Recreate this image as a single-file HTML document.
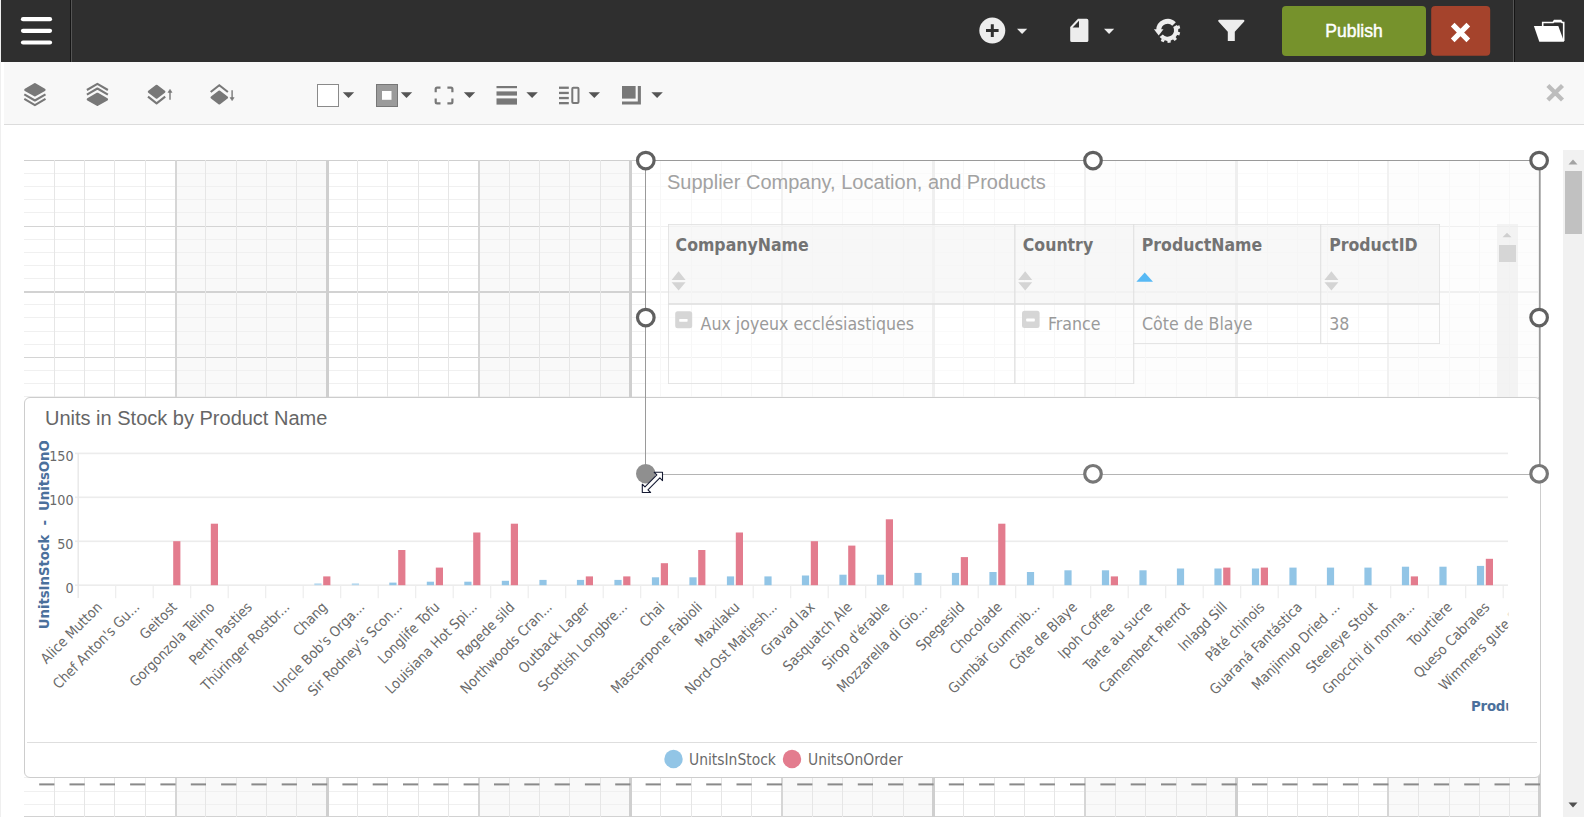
<!DOCTYPE html><html><head><meta charset="utf-8"><title>Dashboard Designer</title><style>
*{box-sizing:border-box}
html,body{margin:0;padding:0}
body{width:1584px;height:817px;overflow:hidden;background:#fff;position:relative;font-family:"Liberation Sans",sans-serif;}
.abs{position:absolute}
#topbar{position:absolute;left:1px;top:0;width:1583px;height:62px;background:#2f2f2f}
#toolbar{position:absolute;left:4px;top:62px;width:1580px;height:63px;background:#f8f8f8;border-bottom:1px solid #dcdcdc}
#leftstrip{position:absolute;left:0;top:0;width:1px;height:817px;background:#efefef}
.os{font-family:"DejaVu Sans Condensed","DejaVu Sans","Liberation Sans",sans-serif;font-stretch:condensed}
svg{position:absolute;left:0;top:0;overflow:visible}
</style></head><body>
<div id="leftstrip"></div>
<div id="canvas" class="abs" style="left:0;top:0;width:1584px;height:817px"><svg width="1584" height="817" viewBox="0 0 1584 817" shape-rendering="crispEdges"><rect x="175.60" y="160.00" width="151.60" height="657.00" fill="#f9f9f9"/><rect x="478.80" y="160.00" width="151.60" height="657.00" fill="#f9f9f9"/><rect x="782.00" y="160.00" width="151.60" height="657.00" fill="#f9f9f9"/><rect x="1085.20" y="160.00" width="151.60" height="657.00" fill="#f9f9f9"/><rect x="1388.40" y="160.00" width="151.60" height="657.00" fill="#f9f9f9"/><rect x="24.00" y="160.00" width="1516.00" height="1" fill="#cfcfcf"/><rect x="24.00" y="173.00" width="1516.00" height="1" fill="#f0f0f0"/><rect x="24.00" y="186.00" width="1516.00" height="1" fill="#f0f0f0"/><rect x="24.00" y="199.00" width="1516.00" height="1" fill="#f0f0f0"/><rect x="24.00" y="212.00" width="1516.00" height="1" fill="#f0f0f0"/><rect x="24.00" y="226.00" width="1516.00" height="1" fill="#d4d4d4"/><rect x="24.00" y="239.00" width="1516.00" height="1" fill="#f0f0f0"/><rect x="24.00" y="252.00" width="1516.00" height="1" fill="#f0f0f0"/><rect x="24.00" y="265.00" width="1516.00" height="1" fill="#f0f0f0"/><rect x="24.00" y="278.00" width="1516.00" height="1" fill="#f0f0f0"/><rect x="24.00" y="291.00" width="1516.00" height="2" fill="#d2d2d2"/><rect x="24.00" y="304.00" width="1516.00" height="1" fill="#f0f0f0"/><rect x="24.00" y="317.00" width="1516.00" height="1" fill="#f0f0f0"/><rect x="24.00" y="331.00" width="1516.00" height="1" fill="#f0f0f0"/><rect x="24.00" y="344.00" width="1516.00" height="1" fill="#f0f0f0"/><rect x="24.00" y="357.00" width="1516.00" height="1" fill="#d4d4d4"/><rect x="24.00" y="370.00" width="1516.00" height="1" fill="#f0f0f0"/><rect x="24.00" y="383.00" width="1516.00" height="1" fill="#f0f0f0"/><rect x="24.00" y="396.00" width="1516.00" height="1" fill="#f0f0f0"/><rect x="24.00" y="409.00" width="1516.00" height="1" fill="#f0f0f0"/><rect x="24.00" y="422.00" width="1516.00" height="2" fill="#d2d2d2"/><rect x="24.00" y="436.00" width="1516.00" height="1" fill="#f0f0f0"/><rect x="24.00" y="449.00" width="1516.00" height="1" fill="#f0f0f0"/><rect x="24.00" y="462.00" width="1516.00" height="1" fill="#f0f0f0"/><rect x="24.00" y="475.00" width="1516.00" height="1" fill="#f0f0f0"/><rect x="24.00" y="488.00" width="1516.00" height="1" fill="#d4d4d4"/><rect x="24.00" y="501.00" width="1516.00" height="1" fill="#f0f0f0"/><rect x="24.00" y="514.00" width="1516.00" height="1" fill="#f0f0f0"/><rect x="24.00" y="527.00" width="1516.00" height="1" fill="#f0f0f0"/><rect x="24.00" y="540.00" width="1516.00" height="1" fill="#f0f0f0"/><rect x="24.00" y="554.00" width="1516.00" height="2" fill="#d2d2d2"/><rect x="24.00" y="567.00" width="1516.00" height="1" fill="#f0f0f0"/><rect x="24.00" y="580.00" width="1516.00" height="1" fill="#f0f0f0"/><rect x="24.00" y="593.00" width="1516.00" height="1" fill="#f0f0f0"/><rect x="24.00" y="606.00" width="1516.00" height="1" fill="#f0f0f0"/><rect x="24.00" y="619.00" width="1516.00" height="1" fill="#d4d4d4"/><rect x="24.00" y="632.00" width="1516.00" height="1" fill="#f0f0f0"/><rect x="24.00" y="645.00" width="1516.00" height="1" fill="#f0f0f0"/><rect x="24.00" y="659.00" width="1516.00" height="1" fill="#f0f0f0"/><rect x="24.00" y="672.00" width="1516.00" height="1" fill="#f0f0f0"/><rect x="24.00" y="685.00" width="1516.00" height="2" fill="#d2d2d2"/><rect x="24.00" y="698.00" width="1516.00" height="1" fill="#f0f0f0"/><rect x="24.00" y="711.00" width="1516.00" height="1" fill="#f0f0f0"/><rect x="24.00" y="724.00" width="1516.00" height="1" fill="#f0f0f0"/><rect x="24.00" y="737.00" width="1516.00" height="1" fill="#f0f0f0"/><rect x="24.00" y="750.00" width="1516.00" height="1" fill="#d4d4d4"/><rect x="24.00" y="764.00" width="1516.00" height="1" fill="#f0f0f0"/><rect x="24.00" y="777.00" width="1516.00" height="1" fill="#f0f0f0"/><rect x="24.00" y="791.00" width="1516.00" height="1" fill="#f0f0f0"/><rect x="24.00" y="804.00" width="1516.00" height="1" fill="#f0f0f0"/><rect x="24.00" y="816.00" width="1516.00" height="2" fill="#d2d2d2"/><rect x="54" y="160.00" width="1" height="657.00" fill="#e6e6e6"/><rect x="84" y="160.00" width="1" height="657.00" fill="#e6e6e6"/><rect x="114" y="160.00" width="1" height="657.00" fill="#e6e6e6"/><rect x="145" y="160.00" width="1" height="657.00" fill="#e6e6e6"/><rect x="175" y="160.00" width="2" height="657.00" fill="#d6d6d6"/><rect x="205" y="160.00" width="1" height="657.00" fill="#e6e6e6"/><rect x="236" y="160.00" width="1" height="657.00" fill="#e6e6e6"/><rect x="266" y="160.00" width="1" height="657.00" fill="#e6e6e6"/><rect x="296" y="160.00" width="1" height="657.00" fill="#e6e6e6"/><rect x="326" y="160.00" width="3" height="657.00" fill="#cfcfcf"/><rect x="357" y="160.00" width="1" height="657.00" fill="#e6e6e6"/><rect x="387" y="160.00" width="1" height="657.00" fill="#e6e6e6"/><rect x="418" y="160.00" width="1" height="657.00" fill="#e6e6e6"/><rect x="448" y="160.00" width="1" height="657.00" fill="#e6e6e6"/><rect x="478" y="160.00" width="2" height="657.00" fill="#d6d6d6"/><rect x="509" y="160.00" width="1" height="657.00" fill="#e6e6e6"/><rect x="539" y="160.00" width="1" height="657.00" fill="#e6e6e6"/><rect x="569" y="160.00" width="1" height="657.00" fill="#e6e6e6"/><rect x="600" y="160.00" width="1" height="657.00" fill="#e6e6e6"/><rect x="629" y="160.00" width="3" height="657.00" fill="#cfcfcf"/><rect x="660" y="160.00" width="1" height="657.00" fill="#e6e6e6"/><rect x="691" y="160.00" width="1" height="657.00" fill="#e6e6e6"/><rect x="721" y="160.00" width="1" height="657.00" fill="#e6e6e6"/><rect x="751" y="160.00" width="1" height="657.00" fill="#e6e6e6"/><rect x="781" y="160.00" width="2" height="657.00" fill="#d6d6d6"/><rect x="812" y="160.00" width="1" height="657.00" fill="#e6e6e6"/><rect x="842" y="160.00" width="1" height="657.00" fill="#e6e6e6"/><rect x="872" y="160.00" width="1" height="657.00" fill="#e6e6e6"/><rect x="903" y="160.00" width="1" height="657.00" fill="#e6e6e6"/><rect x="932" y="160.00" width="3" height="657.00" fill="#cfcfcf"/><rect x="963" y="160.00" width="1" height="657.00" fill="#e6e6e6"/><rect x="994" y="160.00" width="1" height="657.00" fill="#e6e6e6"/><rect x="1024" y="160.00" width="1" height="657.00" fill="#e6e6e6"/><rect x="1054" y="160.00" width="1" height="657.00" fill="#e6e6e6"/><rect x="1084" y="160.00" width="2" height="657.00" fill="#d6d6d6"/><rect x="1115" y="160.00" width="1" height="657.00" fill="#e6e6e6"/><rect x="1145" y="160.00" width="1" height="657.00" fill="#e6e6e6"/><rect x="1176" y="160.00" width="1" height="657.00" fill="#e6e6e6"/><rect x="1206" y="160.00" width="1" height="657.00" fill="#e6e6e6"/><rect x="1235" y="160.00" width="3" height="657.00" fill="#cfcfcf"/><rect x="1267" y="160.00" width="1" height="657.00" fill="#e6e6e6"/><rect x="1297" y="160.00" width="1" height="657.00" fill="#e6e6e6"/><rect x="1327" y="160.00" width="1" height="657.00" fill="#e6e6e6"/><rect x="1358" y="160.00" width="1" height="657.00" fill="#e6e6e6"/><rect x="1387" y="160.00" width="2" height="657.00" fill="#d6d6d6"/><rect x="1418" y="160.00" width="1" height="657.00" fill="#e6e6e6"/><rect x="1449" y="160.00" width="1" height="657.00" fill="#e6e6e6"/><rect x="1479" y="160.00" width="1" height="657.00" fill="#e6e6e6"/><rect x="1509" y="160.00" width="1" height="657.00" fill="#e6e6e6"/><rect x="1538" y="160.00" width="3" height="657.00" fill="#cfcfcf"/><g shape-rendering="auto"><rect x="39.2" y="783.4" width="15.2" height="2" fill="#8a8a8a"/><rect x="69.5" y="783.4" width="15.2" height="2" fill="#8a8a8a"/><rect x="99.8" y="783.4" width="15.2" height="2" fill="#8a8a8a"/><rect x="130.1" y="783.4" width="15.2" height="2" fill="#8a8a8a"/><rect x="160.4" y="783.4" width="15.2" height="2" fill="#8a8a8a"/><rect x="190.8" y="783.4" width="15.2" height="2" fill="#8a8a8a"/><rect x="221.1" y="783.4" width="15.2" height="2" fill="#8a8a8a"/><rect x="251.4" y="783.4" width="15.2" height="2" fill="#8a8a8a"/><rect x="281.7" y="783.4" width="15.2" height="2" fill="#8a8a8a"/><rect x="312.0" y="783.4" width="15.2" height="2" fill="#8a8a8a"/><rect x="342.4" y="783.4" width="15.2" height="2" fill="#8a8a8a"/><rect x="372.7" y="783.4" width="15.2" height="2" fill="#8a8a8a"/><rect x="403.0" y="783.4" width="15.2" height="2" fill="#8a8a8a"/><rect x="433.3" y="783.4" width="15.2" height="2" fill="#8a8a8a"/><rect x="463.6" y="783.4" width="15.2" height="2" fill="#8a8a8a"/><rect x="494.0" y="783.4" width="15.2" height="2" fill="#8a8a8a"/><rect x="524.3" y="783.4" width="15.2" height="2" fill="#8a8a8a"/><rect x="554.6" y="783.4" width="15.2" height="2" fill="#8a8a8a"/><rect x="584.9" y="783.4" width="15.2" height="2" fill="#8a8a8a"/><rect x="615.2" y="783.4" width="15.2" height="2" fill="#8a8a8a"/><rect x="645.6" y="783.4" width="15.2" height="2" fill="#8a8a8a"/><rect x="675.9" y="783.4" width="15.2" height="2" fill="#8a8a8a"/><rect x="706.2" y="783.4" width="15.2" height="2" fill="#8a8a8a"/><rect x="736.5" y="783.4" width="15.2" height="2" fill="#8a8a8a"/><rect x="766.8" y="783.4" width="15.2" height="2" fill="#8a8a8a"/><rect x="797.2" y="783.4" width="15.2" height="2" fill="#8a8a8a"/><rect x="827.5" y="783.4" width="15.2" height="2" fill="#8a8a8a"/><rect x="857.8" y="783.4" width="15.2" height="2" fill="#8a8a8a"/><rect x="888.1" y="783.4" width="15.2" height="2" fill="#8a8a8a"/><rect x="918.4" y="783.4" width="15.2" height="2" fill="#8a8a8a"/><rect x="948.8" y="783.4" width="15.2" height="2" fill="#8a8a8a"/><rect x="979.1" y="783.4" width="15.2" height="2" fill="#8a8a8a"/><rect x="1009.4" y="783.4" width="15.2" height="2" fill="#8a8a8a"/><rect x="1039.7" y="783.4" width="15.2" height="2" fill="#8a8a8a"/><rect x="1070.0" y="783.4" width="15.2" height="2" fill="#8a8a8a"/><rect x="1100.4" y="783.4" width="15.2" height="2" fill="#8a8a8a"/><rect x="1130.7" y="783.4" width="15.2" height="2" fill="#8a8a8a"/><rect x="1161.0" y="783.4" width="15.2" height="2" fill="#8a8a8a"/><rect x="1191.3" y="783.4" width="15.2" height="2" fill="#8a8a8a"/><rect x="1221.6" y="783.4" width="15.2" height="2" fill="#8a8a8a"/><rect x="1252.0" y="783.4" width="15.2" height="2" fill="#8a8a8a"/><rect x="1282.3" y="783.4" width="15.2" height="2" fill="#8a8a8a"/><rect x="1312.6" y="783.4" width="15.2" height="2" fill="#8a8a8a"/><rect x="1342.9" y="783.4" width="15.2" height="2" fill="#8a8a8a"/><rect x="1373.2" y="783.4" width="15.2" height="2" fill="#8a8a8a"/><rect x="1403.6" y="783.4" width="15.2" height="2" fill="#8a8a8a"/><rect x="1433.9" y="783.4" width="15.2" height="2" fill="#8a8a8a"/><rect x="1464.2" y="783.4" width="15.2" height="2" fill="#8a8a8a"/><rect x="1494.5" y="783.4" width="15.2" height="2" fill="#8a8a8a"/><rect x="1524.8" y="783.4" width="15.2" height="2" fill="#8a8a8a"/></g></svg></div>
<div id="widget" class="abs os" style="left:646px;top:161px;width:894px;height:236px;background:rgba(255,255,255,0.66);overflow:hidden">
<div class="abs" style="left:21px;top:9px;font-family:'Liberation Sans',sans-serif;font-size:20px;line-height:24px;color:#a2a2a2;white-space:nowrap">Supplier Company, Location, and Products</div>
<!-- inner scrollbar -->
<div class="abs" style="left:851px;top:63px;width:21px;height:180px;background:rgba(238,238,238,0.62)"></div>
<div class="abs" style="left:853px;top:84px;width:17px;height:17px;background:#d6d6d6"></div>
<svg width="894" height="236" viewBox="646 161 894 236">
<path d="M1502.5 237.2h9l-4.5-4.5z" fill="#cfcfcf"/>
<!-- header bg -->
<rect x="669" y="225" width="770" height="79" fill="#f4f4f4" fill-opacity="0.6"/>
<!-- borders -->
<g fill="#e0e0e0" fill-opacity="0.85">
<rect x="668" y="224" width="772" height="1"/>
<rect x="668" y="303" width="772" height="2"/>
<rect x="668" y="224" width="1" height="160"/>
<rect x="1014" y="224" width="1.6" height="160"/>
<rect x="1133" y="224" width="1.3" height="160"/>
<rect x="1320" y="224" width="1.3" height="120"/>
<rect x="1439" y="224" width="1" height="120"/>
<rect x="668" y="383" width="466" height="1"/>
<rect x="1133" y="343" width="307" height="1"/>
</g>
<!-- sort arrows -->
<g fill="#d4d4d4">
<path d="M671.6 280l7-8.8l7 8.8zM671.6 282.2h14l-7 8.2z"/>
<path d="M1018.2 280l7-8.8l7 8.8zM1018.2 282.2h14l-7 8.2z"/>
<path d="M1324.4 280l7-8.8l7 8.8zM1324.4 282.2h14l-7 8.2z"/>
</g>
<path d="M1136.4 281.8l8.3-9.4l8.3 9.4z" fill="#57b9f5"/>
<!-- minus boxes -->
<rect x="675.2" y="311.2" width="17" height="17" rx="2.5" fill="#d6d6d6"/><rect x="679.2" y="318.9" width="8.4" height="2.8" rx="0.6" fill="#fff"/>
<rect x="1022" y="310.8" width="17.6" height="17.2" rx="2.5" fill="#d6d6d6"/><rect x="1026.2" y="318.6" width="8.6" height="2.8" rx="0.6" fill="#fff"/>
<g font-size="17.5" font-weight="bold" fill="#737373">
<text x="675.6" y="250.9">CompanyName</text>
<text x="1022.8" y="250.9">Country</text>
<text x="1141.8" y="250.9">ProductName</text>
<text x="1329.2" y="250.9">ProductID</text>
</g>
<g font-size="17.6" fill="#9a9a9a">
<text x="700.6" y="329.8">Aux joyeux ecclésiastiques</text>
<text x="1048" y="329.8">France</text>
<text x="1142" y="329.8">Côte de Blaye</text>
<text x="1329.2" y="329.8">38</text>
</g>
</svg>
</div>

<div id="chartpanel" class="abs" style="left:24px;top:397px;width:1517px;height:381px;background:#fff;border:1px solid #cdcdcd;border-radius:6px"></div>
<div class="abs" style="left:45px;top:406px;font-size:20px;line-height:24px;color:#666;white-space:nowrap">Units in Stock by Product Name</div>
<div class="abs" style="left:27px;top:742px;width:1510px;height:1px;background:#dedede"></div>
<svg width="1584" height="817" viewBox="0 0 1584 817">
<defs><clipPath id="cp"><rect x="24" y="440" width="1484.2" height="290"/></clipPath><clipPath id="cpy"><rect x="24" y="441" width="60" height="240"/></clipPath></defs>
<g clip-path="url(#cp)">
<rect x="75" y="584.4" width="1433.2" height="1.6" fill="#ececec"/>
<rect x="75" y="540.5" width="1433.2" height="1.6" fill="#ececec"/>
<rect x="75" y="496.5" width="1433.2" height="1.6" fill="#ececec"/>
<rect x="75" y="452.6" width="1433.2" height="1.6" fill="#ececec"/>
<rect x="77.5" y="453" width="1.4" height="145" fill="#e8e8e8"/>
<rect x="115.1" y="585.2" width="1.2" height="13" fill="#ededed"/>
<rect x="152.6" y="585.2" width="1.2" height="13" fill="#ededed"/>
<rect x="190.1" y="585.2" width="1.2" height="13" fill="#ededed"/>
<rect x="227.6" y="585.2" width="1.2" height="13" fill="#ededed"/>
<rect x="265.1" y="585.2" width="1.2" height="13" fill="#ededed"/>
<rect x="302.6" y="585.2" width="1.2" height="13" fill="#ededed"/>
<rect x="340.1" y="585.2" width="1.2" height="13" fill="#ededed"/>
<rect x="377.6" y="585.2" width="1.2" height="13" fill="#ededed"/>
<rect x="415.1" y="585.2" width="1.2" height="13" fill="#ededed"/>
<rect x="452.6" y="585.2" width="1.2" height="13" fill="#ededed"/>
<rect x="490.1" y="585.2" width="1.2" height="13" fill="#ededed"/>
<rect x="527.6" y="585.2" width="1.2" height="13" fill="#ededed"/>
<rect x="565.1" y="585.2" width="1.2" height="13" fill="#ededed"/>
<rect x="602.6" y="585.2" width="1.2" height="13" fill="#ededed"/>
<rect x="640.1" y="585.2" width="1.2" height="13" fill="#ededed"/>
<rect x="677.6" y="585.2" width="1.2" height="13" fill="#ededed"/>
<rect x="715.1" y="585.2" width="1.2" height="13" fill="#ededed"/>
<rect x="752.6" y="585.2" width="1.2" height="13" fill="#ededed"/>
<rect x="790.1" y="585.2" width="1.2" height="13" fill="#ededed"/>
<rect x="827.6" y="585.2" width="1.2" height="13" fill="#ededed"/>
<rect x="865.1" y="585.2" width="1.2" height="13" fill="#ededed"/>
<rect x="902.6" y="585.2" width="1.2" height="13" fill="#ededed"/>
<rect x="940.1" y="585.2" width="1.2" height="13" fill="#ededed"/>
<rect x="977.6" y="585.2" width="1.2" height="13" fill="#ededed"/>
<rect x="1015.1" y="585.2" width="1.2" height="13" fill="#ededed"/>
<rect x="1052.6" y="585.2" width="1.2" height="13" fill="#ededed"/>
<rect x="1090.1" y="585.2" width="1.2" height="13" fill="#ededed"/>
<rect x="1127.6" y="585.2" width="1.2" height="13" fill="#ededed"/>
<rect x="1165.1" y="585.2" width="1.2" height="13" fill="#ededed"/>
<rect x="1202.6" y="585.2" width="1.2" height="13" fill="#ededed"/>
<rect x="1240.1" y="585.2" width="1.2" height="13" fill="#ededed"/>
<rect x="1277.6" y="585.2" width="1.2" height="13" fill="#ededed"/>
<rect x="1315.1" y="585.2" width="1.2" height="13" fill="#ededed"/>
<rect x="1352.6" y="585.2" width="1.2" height="13" fill="#ededed"/>
<rect x="1390.1" y="585.2" width="1.2" height="13" fill="#ededed"/>
<rect x="1427.6" y="585.2" width="1.2" height="13" fill="#ededed"/>
<rect x="1465.1" y="585.2" width="1.2" height="13" fill="#ededed"/>
<rect x="1502.6" y="585.2" width="1.2" height="13" fill="#ededed"/>
<rect x="173.2" y="541.2" width="7.2" height="44.0" fill="#e37c8e"/>
<rect x="210.8" y="523.7" width="7.2" height="61.5" fill="#e37c8e"/>
<rect x="314.3" y="583.4" width="7.2" height="1.8" fill="#b5d8ee"/>
<rect x="323.2" y="576.4" width="7.2" height="8.8" fill="#e37c8e"/>
<rect x="351.8" y="583.4" width="7.2" height="1.8" fill="#b5d8ee"/>
<rect x="389.3" y="582.6" width="7.2" height="2.6" fill="#92c5e6"/>
<rect x="398.2" y="550.0" width="7.2" height="35.2" fill="#e37c8e"/>
<rect x="426.8" y="581.7" width="7.2" height="3.5" fill="#92c5e6"/>
<rect x="435.8" y="567.6" width="7.2" height="17.6" fill="#e37c8e"/>
<rect x="464.3" y="581.7" width="7.2" height="3.5" fill="#92c5e6"/>
<rect x="473.2" y="532.5" width="7.2" height="52.7" fill="#e37c8e"/>
<rect x="501.8" y="580.8" width="7.2" height="4.4" fill="#92c5e6"/>
<rect x="510.8" y="523.7" width="7.2" height="61.5" fill="#e37c8e"/>
<rect x="539.4" y="579.9" width="7.2" height="5.3" fill="#92c5e6"/>
<rect x="576.9" y="579.9" width="7.2" height="5.3" fill="#92c5e6"/>
<rect x="585.8" y="576.4" width="7.2" height="8.8" fill="#e37c8e"/>
<rect x="614.4" y="579.9" width="7.2" height="5.3" fill="#92c5e6"/>
<rect x="623.2" y="576.4" width="7.2" height="8.8" fill="#e37c8e"/>
<rect x="651.9" y="577.3" width="7.2" height="7.9" fill="#92c5e6"/>
<rect x="660.8" y="563.2" width="7.2" height="22.0" fill="#e37c8e"/>
<rect x="689.4" y="577.3" width="7.2" height="7.9" fill="#92c5e6"/>
<rect x="698.2" y="550.0" width="7.2" height="35.2" fill="#e37c8e"/>
<rect x="726.9" y="576.4" width="7.2" height="8.8" fill="#92c5e6"/>
<rect x="735.8" y="532.5" width="7.2" height="52.7" fill="#e37c8e"/>
<rect x="764.4" y="576.4" width="7.2" height="8.8" fill="#92c5e6"/>
<rect x="801.9" y="575.5" width="7.2" height="9.7" fill="#92c5e6"/>
<rect x="810.8" y="541.2" width="7.2" height="44.0" fill="#e37c8e"/>
<rect x="839.4" y="574.7" width="7.2" height="10.5" fill="#92c5e6"/>
<rect x="848.2" y="545.6" width="7.2" height="39.6" fill="#e37c8e"/>
<rect x="876.9" y="574.7" width="7.2" height="10.5" fill="#92c5e6"/>
<rect x="885.8" y="519.3" width="7.2" height="65.9" fill="#e37c8e"/>
<rect x="914.4" y="572.9" width="7.2" height="12.3" fill="#92c5e6"/>
<rect x="951.9" y="572.9" width="7.2" height="12.3" fill="#92c5e6"/>
<rect x="960.8" y="557.1" width="7.2" height="28.1" fill="#e37c8e"/>
<rect x="989.4" y="572.0" width="7.2" height="13.2" fill="#92c5e6"/>
<rect x="998.2" y="523.7" width="7.2" height="61.5" fill="#e37c8e"/>
<rect x="1026.9" y="572.0" width="7.2" height="13.2" fill="#92c5e6"/>
<rect x="1064.4" y="570.3" width="7.2" height="14.9" fill="#92c5e6"/>
<rect x="1101.9" y="570.3" width="7.2" height="14.9" fill="#92c5e6"/>
<rect x="1110.8" y="576.4" width="7.2" height="8.8" fill="#e37c8e"/>
<rect x="1139.4" y="570.3" width="7.2" height="14.9" fill="#92c5e6"/>
<rect x="1176.9" y="568.5" width="7.2" height="16.7" fill="#92c5e6"/>
<rect x="1214.4" y="568.5" width="7.2" height="16.7" fill="#92c5e6"/>
<rect x="1223.2" y="567.6" width="7.2" height="17.6" fill="#e37c8e"/>
<rect x="1251.9" y="568.5" width="7.2" height="16.7" fill="#92c5e6"/>
<rect x="1260.8" y="567.6" width="7.2" height="17.6" fill="#e37c8e"/>
<rect x="1289.4" y="567.6" width="7.2" height="17.6" fill="#92c5e6"/>
<rect x="1326.9" y="567.6" width="7.2" height="17.6" fill="#92c5e6"/>
<rect x="1364.4" y="567.6" width="7.2" height="17.6" fill="#92c5e6"/>
<rect x="1401.9" y="566.7" width="7.2" height="18.5" fill="#92c5e6"/>
<rect x="1410.8" y="576.4" width="7.2" height="8.8" fill="#e37c8e"/>
<rect x="1439.4" y="566.7" width="7.2" height="18.5" fill="#92c5e6"/>
<rect x="1476.9" y="565.9" width="7.2" height="19.3" fill="#92c5e6"/>
<rect x="1485.8" y="558.8" width="7.2" height="26.4" fill="#e37c8e"/>
<rect x="1514.4" y="565.9" width="7.2" height="19.3" fill="#92c5e6"/>
<rect x="1523.2" y="514.9" width="7.2" height="70.3" fill="#e37c8e"/>
<g class="os" font-size="14.2" fill="#6a6a6a" text-anchor="end">
<text transform="translate(103.0 608.0) rotate(-45)">Alice Mutton</text>
<text transform="translate(140.4 608.0) rotate(-45)">Chef Anton's Gu...</text>
<text transform="translate(177.9 608.0) rotate(-45)">Geitost</text>
<text transform="translate(215.4 608.0) rotate(-45)">Gorgonzola Telino</text>
<text transform="translate(252.9 608.0) rotate(-45)">Perth Pasties</text>
<text transform="translate(290.4 608.0) rotate(-45)">Thüringer Rostbr...</text>
<text transform="translate(327.9 608.0) rotate(-45)">Chang</text>
<text transform="translate(365.4 608.0) rotate(-45)">Uncle Bob's Orga...</text>
<text transform="translate(402.9 608.0) rotate(-45)">Sir Rodney's Scon...</text>
<text transform="translate(440.4 608.0) rotate(-45)">Longlife Tofu</text>
<text transform="translate(477.9 608.0) rotate(-45)">Louisiana Hot Spi...</text>
<text transform="translate(515.5 608.0) rotate(-45)">Røgede sild</text>
<text transform="translate(553.0 608.0) rotate(-45)">Northwoods Cran...</text>
<text transform="translate(590.5 608.0) rotate(-45)">Outback Lager</text>
<text transform="translate(628.0 608.0) rotate(-45)">Scottish Longbre...</text>
<text transform="translate(665.5 608.0) rotate(-45)">Chai</text>
<text transform="translate(703.0 608.0) rotate(-45)">Mascarpone Fabioli</text>
<text transform="translate(740.5 608.0) rotate(-45)">Maxilaku</text>
<text transform="translate(778.0 608.0) rotate(-45)">Nord-Ost Matjesh...</text>
<text transform="translate(815.5 608.0) rotate(-45)">Gravad lax</text>
<text transform="translate(853.0 608.0) rotate(-45)">Sasquatch Ale</text>
<text transform="translate(890.5 608.0) rotate(-45)">Sirop d'érable</text>
<text transform="translate(928.0 608.0) rotate(-45)">Mozzarella di Gio...</text>
<text transform="translate(965.5 608.0) rotate(-45)">Spegesild</text>
<text transform="translate(1003.0 608.0) rotate(-45)">Chocolade</text>
<text transform="translate(1040.5 608.0) rotate(-45)">Gumbär Gummib...</text>
<text transform="translate(1078.0 608.0) rotate(-45)">Côte de Blaye</text>
<text transform="translate(1115.5 608.0) rotate(-45)">Ipoh Coffee</text>
<text transform="translate(1153.0 608.0) rotate(-45)">Tarte au sucre</text>
<text transform="translate(1190.5 608.0) rotate(-45)">Camembert Pierrot</text>
<text transform="translate(1228.0 608.0) rotate(-45)">Inlagd Sill</text>
<text transform="translate(1265.5 608.0) rotate(-45)">Pâté chinois</text>
<text transform="translate(1303.0 608.0) rotate(-45)">Guaraná Fantástica</text>
<text transform="translate(1340.5 608.0) rotate(-45)">Manjimup Dried ...</text>
<text transform="translate(1378.0 608.0) rotate(-45)">Steeleye Stout</text>
<text transform="translate(1415.5 608.0) rotate(-45)">Gnocchi di nonna...</text>
<text transform="translate(1453.0 608.0) rotate(-45)">Tourtière</text>
<text transform="translate(1490.5 608.0) rotate(-45)">Queso Cabrales</text>
<text transform="translate(1528.0 608.0) rotate(-45)">Wimmers gute S...</text>
</g>
<text class="os" x="1471" y="711" font-size="14.8" font-weight="bold" letter-spacing="-0.2" fill="#4b709c">Product Name</text>
</g>
<g class="os" font-size="14.2" fill="#6a6a6a" text-anchor="end">
<text x="73.5" y="592.8">0</text>
<text x="73.5" y="548.9">50</text>
<text x="73.5" y="504.9">100</text>
<text x="73.5" y="461.0">150</text>
</g>
<g clip-path="url(#cpy)"><text class="os" transform="translate(49.3 629.2) rotate(-90)" font-size="14.8" font-weight="bold" letter-spacing="-0.07" fill="#4b709c" style="white-space:pre">UnitsInStock  -  UnitsOnOrder</text></g>
<circle cx="673.5" cy="759" r="9.2" fill="#92c5e6"/><circle cx="792" cy="759" r="9.2" fill="#e37c8e"/>
<g class="os" font-size="15.45" fill="#6a6a6a"><text x="689" y="764.5">UnitsInStock</text><text x="808" y="764.5">UnitsOnOrder</text></g>
</svg>
<svg width="1584" height="817" viewBox="0 0 1584 817">
<g fill="#9a9a9a">
<rect x="646" y="160" width="894" height="1"/>
<rect x="645" y="160" width="1" height="314"/>
<rect x="1539" y="160" width="1.4" height="314"/>
<rect x="646" y="474" width="894" height="1" fill="#b4b4b4"/>
</g>
<g fill="#fff" stroke="#606060" stroke-width="3.2">
<circle cx="645.8" cy="160.6" r="8.3"/><circle cx="1093" cy="160.6" r="8.3"/><circle cx="1539.1" cy="160.6" r="8.3"/>
<circle cx="645.8" cy="317.6" r="8.3"/><circle cx="1539.1" cy="317.6" r="8.3"/>
<circle cx="1093" cy="473.8" r="8.3" stroke="#777"/><circle cx="1539.1" cy="473.8" r="8.3" stroke="#777"/>
</g>
<circle cx="645.7" cy="473.7" r="9.7" fill="#8f8f8f"/>
<path d="M654.2 472.3L662.5 472.3L662.5 480.6L659.85 477.95L647.95 489.85L650.6 492.5L642.3 492.5L642.3 484.2L644.95 486.85L656.85 474.95Z" fill="#fff" stroke="#161b33" stroke-width="1.1" stroke-linejoin="round"/>
</svg>

<div class="abs" style="left:1563px;top:150px;width:21px;height:667px;background:#f1f1f1"></div>
<div class="abs" style="left:1565px;top:171px;width:17px;height:63px;background:#c1c1c1"></div>
<svg width="1584" height="817" viewBox="0 0 1584 817">
<path d="M1568.5 164.5h9l-4.5-5z" fill="#a3a3a3"/>
<path d="M1568.5 802.5h9l-4.5 5z" fill="#505050"/>
</svg>

<div id="topbar"><div class="abs" style="left:69px;top:0;width:1px;height:62px;background:#151515"></div>
<div class="abs" style="left:70px;top:0;width:1px;height:62px;background:#555"></div>
<div class="abs" style="left:1513px;top:0;width:1px;height:62px;background:#151515"></div>
<div class="abs" style="left:1512px;top:0;width:1px;height:62px;background:#555"></div>
<svg width="1583" height="62" viewBox="1 0 1583 62">
<!-- hamburger -->
<g stroke="#fff" stroke-width="4.2" stroke-linecap="round">
<line x1="23" y1="19.2" x2="50" y2="19.2"/><line x1="23" y1="30.8" x2="50" y2="30.8"/><line x1="23" y1="42.5" x2="50" y2="42.5"/>
</g>
<!-- plus circle -->
<circle cx="992.3" cy="30.6" r="13" fill="#ededed"/>
<path d="M986 30.6h12.6M992.3 24.3v12.6" stroke="#2f2f2f" stroke-width="3" fill="none"/>
<path d="M1017 28.8h10.2l-5.1 5.2z" fill="#ededed"/>
<!-- file -->
<path d="M1078 18.7h8.7a1.7 1.7 0 0 1 1.7 1.7v20a1.7 1.7 0 0 1-1.7 1.7h-14.8a1.7 1.7 0 0 1-1.7-1.7v-13.4z" fill="#ededed"/>
<path d="M1072.6 27.6l6.4-6.8v6.8z" fill="#2f2f2f"/>
<path d="M1104 28.8h10.2l-5.1 5.2z" fill="#ededed"/>
<!-- refresh gear -->
<path d="M1158.70 30.30A9.00 9.00 0 0 1 1174.06 23.94" fill="none" stroke="#ededed" stroke-width="5"/>
<path d="M1175.06 26.05A8.50 8.50 0 0 1 1161.19 35.76" fill="none" stroke="#ededed" stroke-width="4.2"/>
<path d="M1176.69 25.92L1179.39 25.34L1180.24 28.31L1177.65 29.25zM1177.63 31.52L1180.21 32.51L1179.30 35.47L1176.61 34.84zM1175.36 36.73L1176.99 38.96L1174.62 40.95L1172.70 38.96zM1170.62 39.86L1170.77 42.62L1167.70 43.00L1167.18 40.29zM1164.94 39.91L1163.57 42.31L1160.78 40.95L1161.82 38.39z" fill="#ededed"/>
<path d="M1153.90 29.2h9.6l-4.8 6.4z" fill="#ededed"/>
<!-- filter -->
<path d="M1219.2 19.8h24.2a1 1 0 0 1 .8 1.6l-9.4 10.4v9.2h-7v-9.2l-9.4-10.4a1 1 0 0 1 .8-1.6z" fill="#ededed"/>
<!-- publish -->
<rect x="1282" y="6" width="144" height="50" rx="4" fill="#76922c"/>
<text x="1354" y="37" text-anchor="middle" font-family="Liberation Sans, sans-serif" font-size="17.5" fill="#fff" stroke="#fff" stroke-width="0.45">Publish</text>
<rect x="1431.2" y="6" width="59" height="49.8" rx="4" fill="#a5432c"/>
<path d="M1452.7 24.7l15.6 15.6M1468.3 24.7l-15.6 15.6" stroke="#fff" stroke-width="5.2" fill="none"/>
<!-- folder -->
<path d="M1542.7 30V22.5h10.4l1.3-2h6.4l1.3 2h1.6V41" fill="none" stroke="#fff" stroke-width="1.6"/>
<path d="M1553.4 22.5l1.2-2.2h6.2l1.2 2.2z" fill="#fff"/>
<path d="M1533.9 26h24.4l5.8 15.7h-24.8z" fill="#fff"/>
</svg>
</div>
<div id="toolbar"><svg width="1580" height="62" viewBox="4 62 1580 62">
<g fill="#787878" stroke="#787878" stroke-linejoin="round">
<!-- icon1 bring to front: diamond + 2 chevrons -->
<path d="M34.9 84.4L44.3 89.8L34.9 95.2L25.5 89.8z" stroke-width="2.6"/>
<path d="M24.3 94.3L34.9 100.5L45.5 94.3" fill="none" stroke-width="2.1"/>
<path d="M24.3 98.9L34.9 105.1L45.5 98.9" fill="none" stroke-width="2.1"/>
<!-- icon2 send to back: 2 chevrons + diamond -->
<path d="M86.9 90L97.4 83.9L107.9 90" fill="none" stroke-width="2.1"/>
<path d="M86.9 94.6L97.4 88.5L107.9 94.6" fill="none" stroke-width="2.1"/>
<path d="M97.4 94L106.8 99.3L97.4 104.6L88 99.3z" stroke-width="2.6"/>
<!-- icon3 bring forward -->
<path d="M156.6 86.1L164.1 91.8L156.6 97.5L149.1 91.8z" stroke-width="2.6"/>
<path d="M148 96.6L156.6 103.4L165.2 96.6" fill="none" stroke-width="2.1"/>
<path d="M170 99.8V91" fill="none" stroke-width="1.4"/>
<path d="M167.9 92.4L170 89.3L172.1 92.4z" stroke-width="0.5"/>
<!-- icon4 send backward -->
<path d="M210.7 92L219.3 85.2L227.9 92" fill="none" stroke-width="2.1"/>
<path d="M219.3 91.8L226.8 97.5L219.3 103.2L211.8 97.5z" stroke-width="2.6"/>
<path d="M232.1 90.3V99" fill="none" stroke-width="1.4"/>
<path d="M230 97.6L232.1 100.7L234.2 97.6z" stroke-width="0.5"/>
</g>
<!-- swatch 1 -->
<rect x="317.5" y="84.5" width="21" height="22" fill="#fff" stroke="#8a8a8a" stroke-width="1"/>
<!-- swatch 2 -->
<rect x="376.5" y="84.5" width="21" height="22" fill="#9b9b9b" stroke="#777" stroke-width="1"/>
<rect x="382" y="91" width="9.5" height="8.8" fill="#fff"/>
<!-- carets -->
<g fill="#555">
<path d="M342.8 92.2h11.4l-5.7 5.9z"/>
<path d="M400.8 92.2h11.4l-5.7 5.9z"/>
<path d="M463.8 92.2h11.4l-5.7 5.9z"/>
<path d="M526.4 92.2h11.4l-5.7 5.9z"/>
<path d="M588.6 92.2h11.4l-5.7 5.9z"/>
<path d="M651.4 92.2h11.4l-5.7 5.9z"/>
</g>
<!-- dashed frame -->
<g fill="none" stroke="#787878" stroke-width="2.2" stroke-linejoin="round" stroke-linecap="butt">
<path d="M435.7 92.2V89a1.4 1.4 0 0 1 1.4-1.4h3.4"/>
<path d="M447.4 87.6h3.6a1.4 1.4 0 0 1 1.4 1.4v3.2"/>
<path d="M452.4 98.6v3.4a1.4 1.4 0 0 1-1.4 1.4h-3.6"/>
<path d="M440.5 103.4h-3.4a1.4 1.4 0 0 1-1.4-1.4v-3.4"/>
</g>
<!-- lines -->
<g fill="#787878">
<rect x="496.5" y="86" width="20.5" height="2.2"/>
<rect x="496.5" y="91.4" width="20.5" height="4.2"/>
<rect x="496.5" y="98.4" width="20.5" height="6.2"/>
<!-- lines + rect -->
<rect x="559" y="86.6" width="9.8" height="2.3"/>
<rect x="559" y="91.8" width="9.8" height="2.3"/>
<rect x="559" y="96.9" width="9.8" height="2.3"/>
<rect x="559" y="102" width="9.8" height="2.3"/>
<!-- shadow icon -->
<rect x="622" y="86" width="13.6" height="12.6"/>
<path d="M637.8 86h3.1v18.5h-18.9v-3h15.8z"/>
</g>
<rect x="572.3" y="87.7" width="6.2" height="15.2" rx="1" fill="none" stroke="#787878" stroke-width="2"/>
<!-- close x -->
<path d="M1547.9 85.4l14.6 14.6M1562.5 85.4l-14.6 14.6" stroke="#bdbdbd" stroke-width="4.3" fill="none"/>
</svg>
</div>
</body></html>
